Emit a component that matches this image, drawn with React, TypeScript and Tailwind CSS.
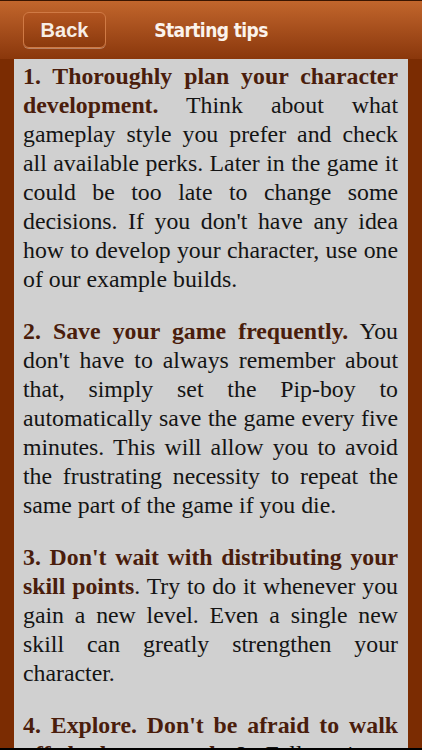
export default function App() {
  const tips = [
    {
      title: "1. Thoroughly plan your character development.",
      body: " Think about what gameplay style you prefer and check all available perks. Later in the game it could be too late to change some decisions. If you don't have any idea how to develop your character, use one of our example builds.",
    },
    {
      title: "2. Save your game frequently.",
      body: " You don't have to always remember about that, simply set the Pip-boy to automatically save the game every five minutes. This will allow you to avoid the frustrating necessity to repeat the same part of the game if you die.",
    },
    {
      title: "3. Don't wait with distributing your skill points",
      body: ". Try to do it whenever you gain a new level. Even a single new skill can greatly strengthen your character.",
    },
    {
      title: "4. Explore. Don't be afraid to walk off the beaten path.",
      body: " In Fallout 4 you can find many interesting locations and side quests that are worth your time.",
    },
  ];

  return (
    <div className="relative h-[750px] w-[422px] overflow-hidden bg-[#7b2c02]">
      {/* header */}
      <div className="relative flex h-[59px] items-center justify-center border-t border-[#3a1500] bg-gradient-to-b from-[#c2662c] to-[#8a370b]">
        <button className="absolute left-[23px] top-[11px] flex h-[36px] w-[83px] items-center justify-center rounded-[6px] border border-[#d07a45] bg-gradient-to-b from-[#b25520] to-[#8c3a0d] shadow-[0_1px_0_rgba(255,255,255,0.35)]">
          <span className="font-['Liberation_Sans',Arial,sans-serif] text-[20px] font-bold text-[#f7eee6]">
            Back
          </span>
        </button>
        <h1 className="font-['DejaVu_Sans_Condensed','Liberation_Sans',sans-serif] text-[19px] font-bold tracking-[-0.6px] text-[#fbf3ec]">
          Starting tips
        </h1>
      </div>

      {/* content */}
      <div className="mx-[14px] h-[700px] overflow-hidden bg-[#d0d0d0] pl-[9px] pr-[10px] pt-[3px]">
        {tips.map((t) => (
          <p
            key={t.title}
            className="mb-[23px] text-justify font-['Liberation_Serif','Times_New_Roman',serif] text-[23.8px] leading-[29px] text-[#141414]"
          >
            <b className="text-[#4a1d0c]">{t.title}</b>
            {t.body}
          </p>
        ))}
      </div>
      <div className="absolute bottom-0 left-0 h-[2px] w-full bg-black" />
    </div>
  );
}
